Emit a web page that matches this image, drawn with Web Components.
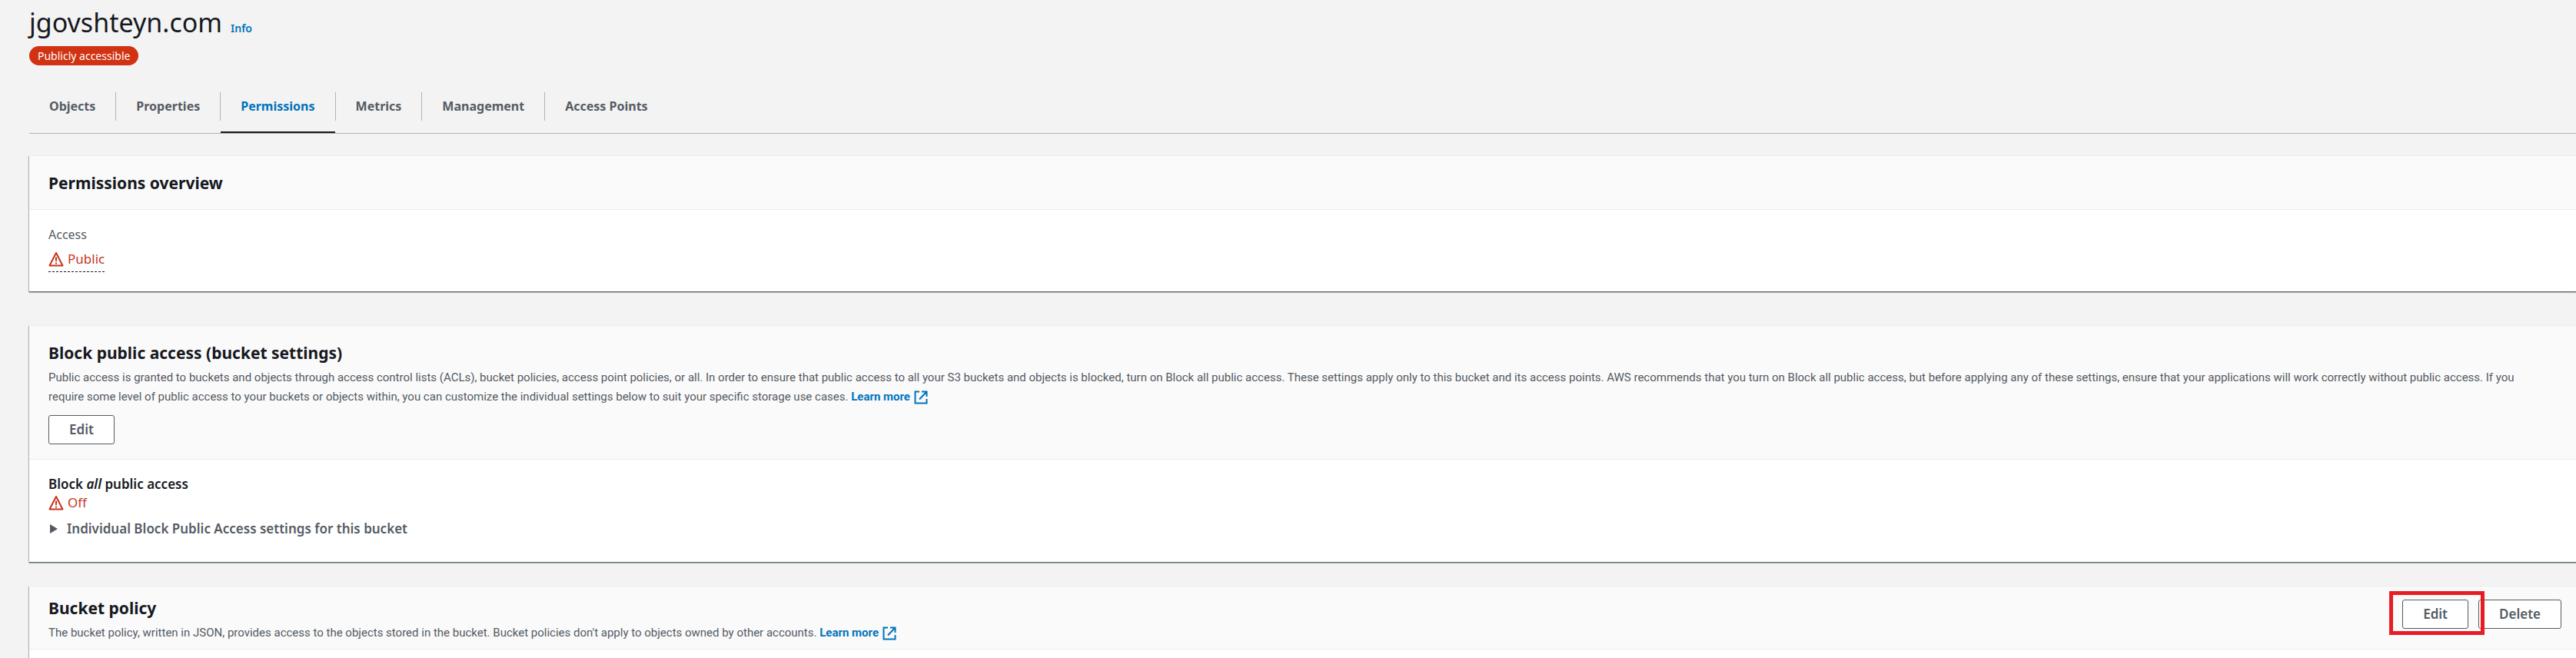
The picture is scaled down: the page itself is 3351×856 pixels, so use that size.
<!DOCTYPE html>
<html lang="en">
<head>
<meta charset="utf-8">
<title>jgovshteyn.com - S3 bucket</title>
<style>
body { margin: 0; background: #f3f3f3; color: #16191f; font: 17px/24px "Noto Sans", "Open Sans", sans-serif; }
</style>
</head>
<body>
<bucket-page></bucket-page>
<script>
function define(name, html) {
  const template = document.createElement('template');
  template.innerHTML = html;
  customElements.define(name, class extends HTMLElement {
    constructor() {
      super();
      this.attachShadow({ mode: 'open' }).append(template.content.cloneNode(true));
    }
  });
}

define('ext-link', `
<style>
:host { display: inline-block; }
a { display: flex; align-items: center; gap: 5px; color: #0073bb; text-decoration: none; font: 700 15px/25px Roboto, sans-serif; }
svg { width: 18px; height: 18px; }
</style>
<a href="#"><slot></slot><svg viewBox="0 0 18 18" fill="none" stroke="currentColor" stroke-width="2" aria-hidden="true"><path d="M7 1.5H1.5V16.5H16.5V11M10 1.5H16.5V8M16 2L7 11.5"/></svg></a>`);

define('status-warning', `
<style>
:host { display: inline-flex; align-items: center; gap: 5px; color: #c7341a; font-size: 17px; line-height: 24px; }
svg { width: 20px; height: 20px; }
</style>
<svg viewBox="0 0 20 20" fill="none" stroke="currentColor" stroke-width="2" aria-hidden="true"><path d="M10 2L18.5 18.5H1.5Z" stroke-linejoin="round"/><path d="M10 7.5V13M10 14.5V16.5"/></svg><span><slot></slot></span>`);

define('app-button', `
<style>
:host { display: inline-block; }
button { display: block; margin: 0; height: 38px; padding: 0 26px; border: 1px solid #545b64; border-radius: 3px; background: #fff; color: #545b64; font: 600 17px/24px "Noto Sans", sans-serif; }
</style>
<button type="button"><slot></slot></button>`);

define('status-badge', `
<style>
:host { display: block; width: fit-content; padding: 0 11px; border-radius: 13px; background: #d13212; color: #fff; font-size: 14px; line-height: 25px; }
</style>
<slot></slot>`);

define('tab-bar', `
<style>
:host { display: block; border-bottom: 1px solid #aab7b8; }
nav { display: flex; }
</style>
<nav><slot></slot></nav>`);

define('tab-item', `
<style>
:host { display: flex; flex-direction: column; height: 53px; }
a { display: block; padding: 6px 26px; border-right: 1px solid #aab7b8; color: #545b64; text-decoration: none; font-weight: 700; font-size: 16px; line-height: 25px; }
:host(:last-child) a { border-right: 0; }
:host([current]) a { color: #0073bb; }
:host([current])::after { content: ""; margin: auto 1px 0 0; height: 2px; background: #16191f; }
</style>
<a href="#"><slot></slot></a>`);

define('content-card', `
<style>
:host { display: block; background: #fff; box-shadow: 0 1px 1px #00141c66, 0 2px 1px #00141c33, -1px 1px 1px #00141c33; }
header { display: flex; justify-content: space-between; align-items: flex-start; padding: 0 19px 0 25px; background: #fafafa; border-top: 1px solid #eaeded; border-bottom: 1px solid #eaeded; }
h2 { margin: 0; font-size: 21px; line-height: 30px; font-weight: 700; }
.text { padding: 20px 0 19px; }
:host([compact]) .text { padding: 13px 0 8px; }
:host([compact]) .actions { padding-top: 17px; }
.body { padding: 20px 25px 25px; }
</style>
<header><div class="text"><h2><slot name="title"></slot></h2><slot name="description"></slot></div><div class="actions"><slot name="actions"></slot></div></header>
<div class="body"><slot></slot></div>`);

define('bucket-page', `
<style>
:host { display: block; height: 100vh; overflow: hidden; box-sizing: border-box; padding-left: 38px; }
h1 { display: flex; align-items: baseline; gap: 11px; margin: 0; font-size: 34px; line-height: 44px; font-weight: 400; padding-top: 7px; }
h1 a { color: #0073bb; font-size: 14px; font-weight: 600; text-decoration: none; }
status-badge { margin-top: 1px; }
tab-bar { margin: 35px 0 28px; }
p { margin: 0; }
.description { font: 15px/25px Roboto, sans-serif; color: #545b64; padding: 5px 32px 0 0; }
.below { display: block; width: fit-content; margin-top: 11px; }
.label { color: #545b64; font-size: 16px; margin-bottom: 8px; }
.public { border-bottom: 1px dashed #16191f; padding-bottom: 4px; }
.strong { font-weight: 600; }
.settings { margin: 6px 0; color: #545b64; font-weight: 600; }
summary { display: flex; align-items: center; gap: 10px; list-style: none; }
summary svg { width: 14px; height: 14px; }
.second { margin-top: 44px; }
.third { margin-top: 31px; }
.group { display: flex; gap: 13px; }
.marked { position: relative; }
.mark { position: absolute; inset: -11px -21px -8px -17px; border: 5px solid #e81c23; pointer-events: none; z-index: 1; }
</style>
<h1>jgovshteyn.com <a href="#">Info</a></h1>
<status-badge>Publicly accessible</status-badge>
<tab-bar>
  <tab-item>Objects</tab-item><tab-item>Properties</tab-item><tab-item current>Permissions</tab-item><tab-item>Metrics</tab-item><tab-item>Management</tab-item><tab-item>Access Points</tab-item>
</tab-bar>
<content-card>
  <span slot="title">Permissions overview</span>
  <p class="label">Access</p>
  <status-warning class="public">Public</status-warning>
</content-card>
<content-card class="second">
  <span slot="title">Block public access (bucket settings)</span>
  <div slot="description">
    <p class="description">Public access is granted to buckets and objects through access control lists (ACLs), bucket policies, access point policies, or all. In order to ensure that public access to all your S3 buckets and objects is blocked, turn on Block all public access. These settings apply only to this bucket and its access points. AWS recommends that you turn on Block all public access, but before applying any of these settings, ensure that your applications will work correctly without public access. If you require some level of public access to your buckets or objects within, you can customize the individual settings below to suit your specific storage use cases. <ext-link>Learn more</ext-link></p>
    <app-button class="below">Edit</app-button>
  </div>
  <p class="strong">Block <em>all</em> public access</p>
  <status-warning>Off</status-warning>
  <details class="settings"><summary><svg viewBox="0 0 14 14" aria-hidden="true"><path d="M2 1V13L12 7Z" fill="#545b64"/></svg>Individual Block Public Access settings for this bucket</summary></details>
</content-card>
<content-card class="third" compact>
  <span slot="title">Bucket policy</span>
  <p slot="description" class="description">The bucket policy, written in JSON, provides access to the objects stored in the bucket. Bucket policies don't apply to objects owned by other accounts. <ext-link>Learn more</ext-link></p>
  <div slot="actions" class="group"><div class="marked"><app-button>Edit</app-button><span class="mark"></span></div><app-button>Delete</app-button></div>
</content-card>
`);
</script>
</body>
</html>
